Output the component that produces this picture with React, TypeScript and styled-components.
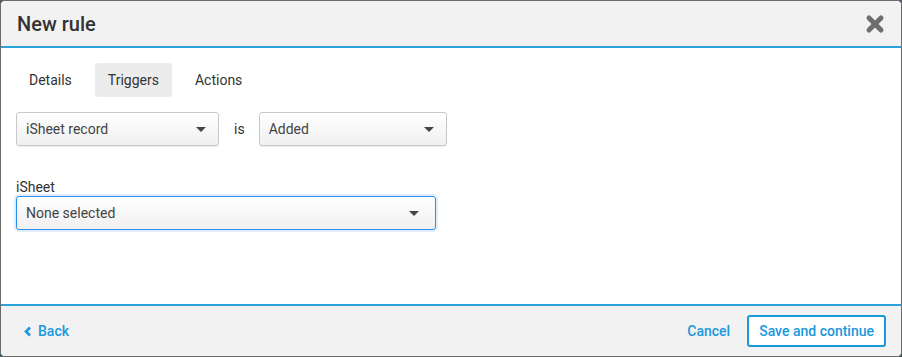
import React from "react";
import styled, { createGlobalStyle } from "styled-components";

const Global = createGlobalStyle`
  html, body { margin: 0; padding: 0; background: #4a5a5e; }
  body { font-family: Roboto, "Noto Sans", Arial, sans-serif; }
  * { box-sizing: border-box; }
`;

const Modal = styled.div`
  width: 902px;
  height: 357px;
  background: #fff;
  border: 1px solid #6b6b6b;
  border-radius: 5px;
  overflow: hidden;
  display: flex;
  flex-direction: column;
`;

const Header = styled.div`
  height: 47px;
  background: #f2f2f2;
  border-bottom: 2px solid #2aa3dc;
  display: flex;
  align-items: center;
  justify-content: space-between;
  padding: 0 16px 0 16px;
`;

const Title = styled.h1`
  margin: 0;
  font-size: 20px;
  font-weight: 500;
  color: #333;
`;

const CloseButton = styled.button`
  border: 0;
  background: none;
  padding: 0;
  display: flex;
  cursor: pointer;
`;

const Body = styled.div`
  flex: 1;
  padding: 15px 15px 0;
`;

const Tabs = styled.div`
  display: flex;
  gap: 10px;
`;

const Tab = styled.div<{ $active?: boolean }>`
  height: 34px;
  padding: 0 13px;
  display: flex;
  align-items: center;
  font-size: 14px;
  color: #333;
  border-radius: 4px;
  background: ${(p) => (p.$active ? "#ececec" : "transparent")};
`;

const TriggerRow = styled.div`
  display: flex;
  align-items: center;
  margin-top: 15px;
`;

const Select = styled.div<{ $width: number; $focused?: boolean }>`
  width: ${(p) => p.$width}px;
  height: 34px;
  border: 1px solid ${(p) => (p.$focused ? "#2f8fe6" : "#c9c9c9")};
  border-radius: 3px;
  background: linear-gradient(#ffffff, #f0f0f0);
  box-shadow: ${(p) =>
    p.$focused ? "0 0 0 2px rgba(47,143,230,0.15)" : "0 1px 1px rgba(0,0,0,0.08)"};
  display: flex;
  align-items: center;
  justify-content: space-between;
  padding: 0 ${(p) => (p.$focused ? 16 : 12)}px 0 9px;
  font-size: 14px;
  color: #444;
`;

const Caret = styled.span`
  width: 0;
  height: 0;
  border-left: 5px solid transparent;
  border-right: 5px solid transparent;
  border-top: 5px solid #444;
`;

const IsLabel = styled.span`
  font-size: 14px;
  color: #333;
  padding: 0 14px 0 15px;
`;

const FieldLabel = styled.div`
  margin-top: 32px;
  font-size: 14px;
  color: #333;
  line-height: 18px;
`;

const Footer = styled.div`
  height: 52px;
  background: #f2f2f2;
  border-top: 2px solid #2aa3dc;
  display: flex;
  align-items: center;
  justify-content: space-between;
  padding: 0 15px 0 23px;
`;

const LinkButton = styled.button`
  border: 0;
  background: none;
  font-family: inherit;
  font-size: 14px;
  font-weight: 500;
  color: #1b97dd;
  display: flex;
  align-items: center;
  gap: 6px;
  padding: 0;
  cursor: pointer;
`;

const Actions = styled.div`
  display: flex;
  align-items: center;
  gap: 17px;
`;

const PrimaryButton = styled.button`
  height: 32px;
  padding: 0 10px;
  border: 2px solid #1b97dd;
  border-radius: 3px;
  background: #fff;
  font-family: inherit;
  font-size: 14px;
  font-weight: 500;
  color: #1b97dd;
  cursor: pointer;
`;

export default function App() {
  return (
    <>
      <Global />
      <Modal>
        <Header>
          <Title>New rule</Title>
          <CloseButton aria-label="Close">
            <svg width="20" height="20" viewBox="0 0 20 20">
              <path d="M4 4 L16 16 M16 4 L4 16" stroke="#6e6e6e" strokeWidth="5" strokeLinecap="round" />
            </svg>
          </CloseButton>
        </Header>
        <Body>
          <Tabs>
            <Tab>Details</Tab>
            <Tab $active>Triggers</Tab>
            <Tab>Actions</Tab>
          </Tabs>
          <TriggerRow>
            <Select $width={203}>
              iSheet record
              <Caret />
            </Select>
            <IsLabel>is</IsLabel>
            <Select $width={188}>
              Added
              <Caret />
            </Select>
          </TriggerRow>
          <FieldLabel>iSheet</FieldLabel>
          <Select $width={420} $focused>
            None selected
            <Caret />
          </Select>
        </Body>
        <Footer>
          <LinkButton>
            <svg width="8" height="11" viewBox="0 0 8 11">
              <path d="M6 1.5 L2 5.5 L6 9.5" stroke="#1b97dd" strokeWidth="2.6" fill="none" />
            </svg>
            Back
          </LinkButton>
          <Actions>
            <LinkButton>Cancel</LinkButton>
            <PrimaryButton>Save and continue</PrimaryButton>
          </Actions>
        </Footer>
      </Modal>
    </>
  );
}
